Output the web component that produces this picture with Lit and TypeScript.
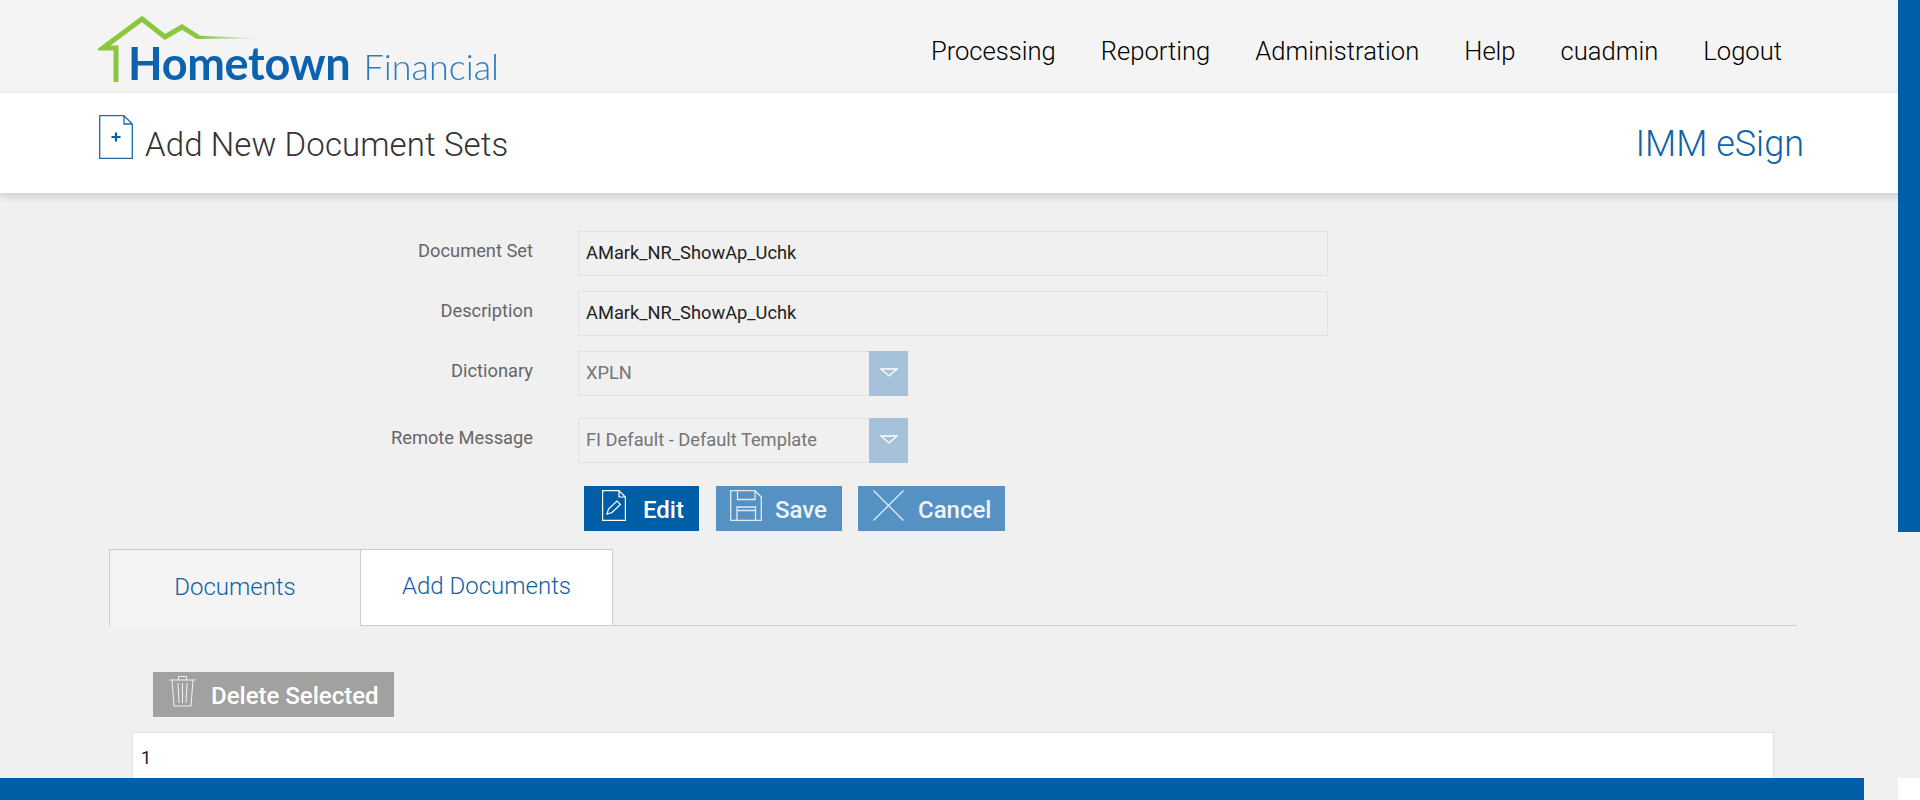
import { LitElement, html, css } from "lit";
import { customElement } from "lit/decorators.js";

const caret = html`<svg width="18" height="9" viewBox="0 0 18 9"><path d="M1 1 H17 L9 8 Z" fill="none" stroke="#fff" stroke-width="1.3"/></svg>`;

@customElement("app-root")
export class AppRoot extends LitElement {
  static styles = css`
    :host { display: block; position: relative; width: 1920px; height: 800px; overflow: hidden; background: #f0f0f0; font-family: Roboto, sans-serif; }
    .top { height: 93px; background: #f4f4f4; display: flex; justify-content: space-between; padding: 0 138px 0 98px; box-sizing: border-box; }
    .logo { position: relative; width: 420px; height: 93px; }
    .roof { position: absolute; left: 0; top: 0; filter: blur(.4px); }
    .brand { display: flex; align-items: baseline; padding: 33px 0 0 30px; line-height: 60px; font-family: Lato, sans-serif; filter: blur(.35px); }
    .home { font-size: 45px; font-weight: 700; color: #0d62ae; letter-spacing: -.3px; }
    .fin { font-size: 36px; font-weight: 300; color: #2f7cbc; margin-left: 13px; }
    nav { display: flex; gap: 45px; padding-top: 32px; font-size: 25.6px; font-weight: 300; color: #000; line-height: 38px; }
    .band { height: 100px; background: #fff; box-shadow: 0 3px 8px rgba(0,0,0,.16); display: flex; align-items: center; padding: 0 116px 0 99px; box-sizing: border-box; position: relative; }
    .band h1 { margin: 2px 0 0 12px; font-size: 33px; font-weight: 300; color: #333; flex: 1; letter-spacing: .1px; }
    .band svg { margin-top: -12px; }
    .app { font-size: 36px; font-weight: 300; color: #0f62a8; margin-top: 2px; }
    .form { padding-top: 38px; display: grid; grid-template-columns: 533px 750px; column-gap: 45px; row-gap: 15px; }
    .lab { justify-self: end; font-size: 18.3px; color: #666; line-height: 40px; }
    .inp { height: 45px; box-sizing: border-box; border: 1px solid #e2e2e2; padding: 0 7px 2px; display: flex; align-items: center; font-size: 18.3px; color: #222; }
    .sel { width: 330px; color: #757575; padding-right: 0; justify-content: space-between; }
    .sel i { width: 39px; height: 45px; box-sizing: border-box; padding-bottom: 3px; margin: -1px -1px -3px 0; background: #a5c2da; display: flex; align-items: center; justify-content: center; }
    .gap { margin-top: 7px; }
    .btns { display: flex; margin: 23px 0 0 584px; }
    .btn { height: 45px; display: flex; align-items: center; box-sizing: border-box; color: #fff; font-size: 24px; font-weight: 500; }
    .btn span { padding-top: 3px; }
    .btn svg, .del svg { margin-top: -7px; }
    .edit { width: 115px; background: #005ea6; padding-left: 18px; gap: 17px; margin-right: 17px; }
    .save { width: 126px; background: #5591c2; padding-left: 14px; gap: 13px; margin-right: 16px; color: #eef4f9; }
    .cancel { width: 147px; background: #5591c2; padding-left: 15px; gap: 14px; color: #eef4f9; }
    .tabs { display: flex; margin: 18px 123px 0 109px; border-bottom: 1px solid #ccc; height: 77px; box-sizing: border-box; }
    .tab { height: 77px; box-sizing: border-box; border: 1px solid #ccc; display: flex; align-items: center; justify-content: center; font-size: 24px; font-weight: 300; color: #0f62a8; padding-bottom: 3px; }
    .t1 { width: 251px; background: #f4f4f4; border-width: 1px 0 0 1px; }
    .t2 { width: 253px; background: #fff; border-width: 1px 1px 1px 1px; }
    .del { margin: 46px 0 0 153px; width: 241px; height: 45px; background: #a3a19f; color: #fff; display: flex; align-items: center; padding-left: 16px; gap: 15px; box-sizing: border-box; font-size: 24px; font-weight: 500; }
    .del span { padding-top: 3px; }
    .tbl { margin: 15px 0 0 132px; width: 1642px; height: 90px; box-sizing: border-box; background: #fff; border: 1px solid #e0e0e0; padding: 14px 8px; font-size: 18.3px; color: #222; }
    .thumb { position: absolute; right: 0; top: 0; width: 22px; height: 532px; background: #005ea6; }
    .hbar { position: absolute; left: 0; bottom: 0; width: 1864px; height: 22px; background: #005ea6; }
    .corner { position: absolute; right: 0; bottom: 0; width: 22px; height: 22px; background: #fff; }
  `;

  render() {
    return html`
      <div class="top">
        <div class="logo">
          <div class="brand"><span class="home">Hometown</span><span class="fin">Financial</span></div>
          <svg class="roof" width="180" height="90" viewBox="98 0 180 90">
            <defs><linearGradient id="g" x1="198" x2="262" y1="0" y2="0" gradientUnits="userSpaceOnUse"><stop offset="0" stop-color="#8cc63f"/><stop offset="1" stop-color="#8cc63f" stop-opacity="0"/></linearGradient></defs>
            <path d="M116 82 V48 H103 L142 19 L165 37 L182 27 L198 37" fill="none" stroke="#8cc63f" stroke-width="5"/>
            <path d="M197 35.5 L262 38.5 L197 39 Z" fill="url(#g)"/>
          </svg>
        </div>
        <nav><span>Processing</span><span>Reporting</span><span>Administration</span><span>Help</span><span>cuadmin</span><span>Logout</span></nav>
      </div>
      <div class="band">
        <svg width="34" height="44" viewBox="0 0 34 44"><path d="M.7 .7 H25 L33.3 9 V43.3 H.7 Z M25 .7 V9 H33.3" fill="none" stroke="#1a6cad" stroke-width="1.3"/><path d="M17 17.5 V26.5 M12.5 22 H21.5" stroke="#005ea6" stroke-width="2.2"/></svg>
        <h1>Add New Document Sets</h1>
        <span class="app">IMM eSign</span>
      </div>
      <div class="form">
        <div class="lab">Document Set</div><div class="inp">AMark_NR_ShowAp_Uchk</div>
        <div class="lab">Description</div><div class="inp">AMark_NR_ShowAp_Uchk</div>
        <div class="lab">Dictionary</div><div class="inp sel"><span>XPLN</span><i>${caret}</i></div>
        <div class="lab gap">Remote Message</div><div class="inp sel gap"><span>FI Default - Default Template</span><i>${caret}</i></div>
      </div>
      <div class="btns">
        <div class="btn edit">
          <svg width="24" height="31" viewBox="0 0 24 31" fill="none" stroke="#fff" stroke-width="1.2"><path d="M.6 .6 H17 L23.4 7 V30.4 H.6 Z M17 .6 V7 H23.4"/><path d="M5 24 L6.5 19 L15 11 L18.5 14.5 L10 22.5 Z"/></svg>
          <span>Edit</span>
        </div>
        <div class="btn save">
          <svg width="32" height="31" viewBox="0 0 32 31" fill="none" stroke="#dfeaf3" stroke-width="1.3"><path d="M.7 .7 H25 L31.3 7 V30.3 H.7 Z"/><path d="M7.5 .7 V9.5 H25 V.7 M7 30.3 V17 H25.5 V30.3 M7 20.5 H25.5"/></svg>
          <span>Save</span>
        </div>
        <div class="btn cancel">
          <svg width="31" height="31" viewBox="0 0 31 31" stroke="#e6eff6" stroke-width="1.3"><path d="M.5 .5 L30.5 30.5 M30.5 .5 L.5 30.5"/></svg>
          <span>Cancel</span>
        </div>
      </div>
      <div class="tabs"><div class="tab t1">Documents</div><div class="tab t2">Add Documents</div></div>
      <div class="del">
        <svg width="27" height="32" viewBox="0 0 27 32" fill="none" stroke="#f2f2f2" stroke-width="1"><path d="M.5 5 H26.5 M9.5 5 V1.5 H17.5 V5 M3 5 L5 31 H22 L24 5 M9 8 L10 28 M13.5 8 V28 M18 8 L17 28"/></svg>
        <span>Delete Selected</span>
      </div>
      <div class="tbl">1</div>
      <div class="thumb"></div>
      <div class="hbar"></div>
      <div class="corner"></div>
    `;
  }
}
